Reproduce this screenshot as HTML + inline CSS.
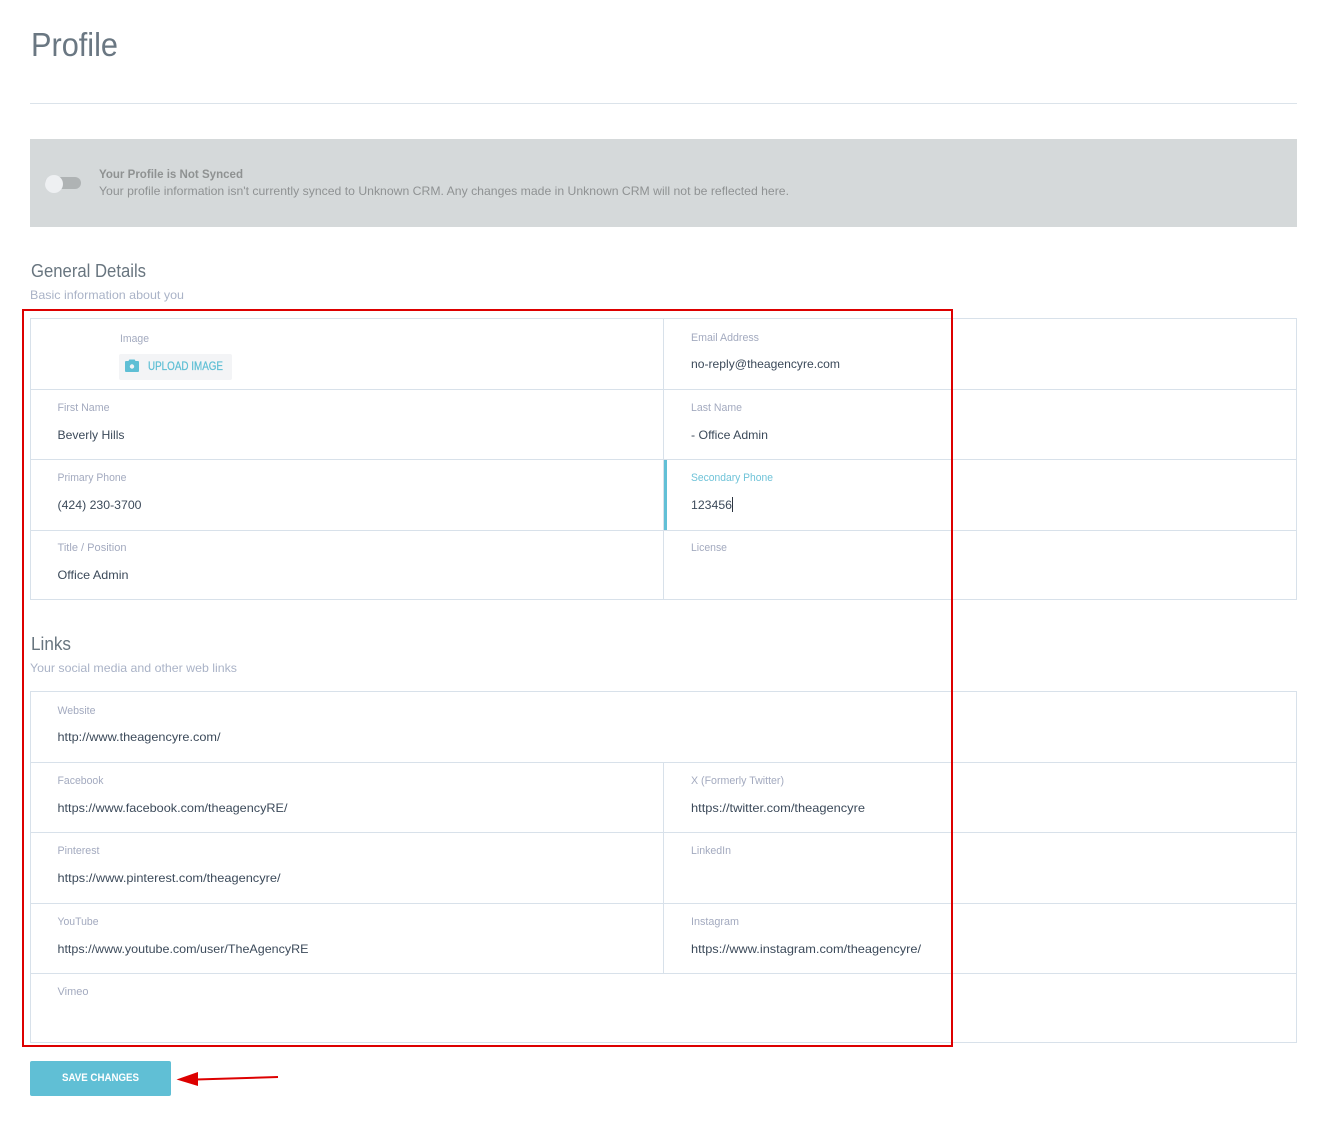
<!DOCTYPE html>
<html lang="en">
<head>
<meta charset="utf-8">
<title>Profile</title>
<style>
html,body{margin:0;padding:0;background:#fff;width:1321px;height:1125px;overflow:hidden}
svg{display:block}
text{font-family:"Liberation Sans",Arial,sans-serif;white-space:pre}
.l{font-size:11px;fill:#a3aabf}
.v{font-size:12px;fill:#3c4a5a}
.h{font-size:18px;fill:#68757f}
.s{font-size:12px;fill:#aab3c7}
.ln{stroke:#d8e1ea;stroke-width:1;fill:none}
</style>
</head>
<body>
<svg width="1321" height="1125" viewBox="0 0 1321 1125" xmlns="http://www.w3.org/2000/svg">
<text x="31" y="56" font-size="33" fill="#6a7782" textLength="87" lengthAdjust="spacingAndGlyphs">Profile</text>
<rect x="30" y="103" width="1267" height="1" fill="#dbe3ea"/>

<rect x="30" y="139" width="1267" height="88" fill="#d5d9da"/>
<rect x="45" y="177" width="36" height="12" rx="6" fill="#afb3b4"/>
<circle cx="54" cy="184" r="9" fill="#eef0f2"/>
<text x="99" y="178" font-size="12" font-weight="bold" fill="#8f9292" textLength="144" lengthAdjust="spacingAndGlyphs">Your Profile is Not Synced</text>
<text x="99" y="195" font-size="12" fill="#8f9293" textLength="690" lengthAdjust="spacingAndGlyphs">Your profile information isn't currently synced to Unknown CRM. Any changes made in Unknown CRM will not be reflected here.</text>

<text class="h" x="31" y="277" textLength="115" lengthAdjust="spacingAndGlyphs">General Details</text>
<text class="s" x="30" y="299" textLength="154" lengthAdjust="spacingAndGlyphs">Basic information about you</text>

<!-- general grid -->
<rect class="ln" x="30.5" y="318.5" width="1266" height="281"/>
<path class="ln" d="M31 389.5H1296M31 459.5H1296M31 530.5H1296M663.5 319V599"/>
<rect x="664" y="460" width="3" height="70" fill="#62c0d6"/>

<text class="l" x="120" y="342" textLength="29" lengthAdjust="spacingAndGlyphs">Image</text>
<rect x="119" y="354" width="113" height="26" rx="2" fill="#f3f4f6"/>
<path d="M125 362a1 1 0 0 1 1-1h2.500l.8-1.500h5.400l.8 1.500h2.500a1 1 0 0 1 1 1v9a1 1 0 0 1-1 1h-12a1 1 0 0 1-1-1z" fill="#5fbfd5"/>
<circle cx="132" cy="366.500" r="2.200" fill="#f3f4f6"/>
<text x="148" y="370" font-size="12" fill="#5fbfd5" stroke="#5fbfd5" stroke-width="0.25" textLength="75" lengthAdjust="spacingAndGlyphs">UPLOAD IMAGE</text>

<text class="l" x="691" y="341" textLength="68" lengthAdjust="spacingAndGlyphs">Email Address</text>
<text class="v" x="691" y="368" textLength="149" lengthAdjust="spacingAndGlyphs">no-reply@theagencyre.com</text>

<text class="l" x="57.500" y="411" textLength="52" lengthAdjust="spacingAndGlyphs">First Name</text>
<text class="v" x="57.500" y="439" textLength="67" lengthAdjust="spacingAndGlyphs">Beverly Hills</text>
<text class="l" x="691" y="411" textLength="51" lengthAdjust="spacingAndGlyphs">Last Name</text>
<text class="v" x="691" y="439" textLength="77" lengthAdjust="spacingAndGlyphs">- Office Admin</text>

<text class="l" x="57.500" y="481" textLength="69" lengthAdjust="spacingAndGlyphs">Primary Phone</text>
<text class="v" x="57.500" y="509" textLength="84" lengthAdjust="spacingAndGlyphs">(424) 230-3700</text>
<text class="l" x="691" y="481" textLength="82" lengthAdjust="spacingAndGlyphs" style="fill:#6fc3d8">Secondary Phone</text>
<text class="v" x="691" y="509" textLength="41" lengthAdjust="spacingAndGlyphs">123456</text>
<rect x="732" y="497" width="1" height="15" fill="#2b3440"/>

<text class="l" x="57.500" y="551" textLength="69" lengthAdjust="spacingAndGlyphs">Title / Position</text>
<text class="v" x="57.500" y="579" textLength="71" lengthAdjust="spacingAndGlyphs">Office Admin</text>
<text class="l" x="691" y="551" textLength="36" lengthAdjust="spacingAndGlyphs">License</text>

<text class="h" x="31" y="650" textLength="40" lengthAdjust="spacingAndGlyphs">Links</text>
<text class="s" x="30" y="672" textLength="207" lengthAdjust="spacingAndGlyphs">Your social media and other web links</text>

<!-- links grid -->
<rect class="ln" x="30.5" y="691.5" width="1266" height="351"/>
<path class="ln" d="M31 762.5H1296M31 832.5H1296M31 903.5H1296M31 973.500H1296M663.5 763V973"/>

<text class="l" x="57.500" y="714" textLength="38" lengthAdjust="spacingAndGlyphs">Website</text>
<text class="v" x="57.500" y="741" textLength="163" lengthAdjust="spacingAndGlyphs">http://www.theagencyre.com/</text>

<text class="l" x="57.500" y="784" textLength="46" lengthAdjust="spacingAndGlyphs">Facebook</text>
<text class="v" x="57.500" y="812" textLength="230" lengthAdjust="spacingAndGlyphs">https://www.facebook.com/theagencyRE/</text>
<text class="l" x="691" y="784" textLength="93" lengthAdjust="spacingAndGlyphs">X (Formerly Twitter)</text>
<text class="v" x="691" y="812" textLength="174" lengthAdjust="spacingAndGlyphs">https://twitter.com/theagencyre</text>

<text class="l" x="57.500" y="854" textLength="42" lengthAdjust="spacingAndGlyphs">Pinterest</text>
<text class="v" x="57.500" y="882" textLength="223" lengthAdjust="spacingAndGlyphs">https://www.pinterest.com/theagencyre/</text>
<text class="l" x="691" y="854" textLength="40" lengthAdjust="spacingAndGlyphs">LinkedIn</text>

<text class="l" x="57.500" y="925" textLength="41" lengthAdjust="spacingAndGlyphs">YouTube</text>
<text class="v" x="57.500" y="953" textLength="251" lengthAdjust="spacingAndGlyphs">https://www.youtube.com/user/TheAgencyRE</text>
<text class="l" x="691" y="925" textLength="48" lengthAdjust="spacingAndGlyphs">Instagram</text>
<text class="v" x="691" y="953" textLength="230" lengthAdjust="spacingAndGlyphs">https://www.instagram.com/theagencyre/</text>

<text class="l" x="57.500" y="995" textLength="31" lengthAdjust="spacingAndGlyphs">Vimeo</text>

<!-- annotation -->
<rect x="23" y="310" width="929" height="736" fill="none" stroke="#dd0000" stroke-width="2"/>

<rect x="30" y="1061" width="141" height="35" rx="2" fill="#60bfd5"/>
<text x="62" y="1081" font-size="11" font-weight="bold" fill="#fff" textLength="77" lengthAdjust="spacingAndGlyphs">SAVE CHANGES</text>

<path d="M176.500 1079.500L198 1072V1086Z" fill="#dd0000"/>
<path d="M196 1079.500L278 1077" stroke="#dd0000" stroke-width="2" fill="none"/>
</svg>
</body>
</html>
